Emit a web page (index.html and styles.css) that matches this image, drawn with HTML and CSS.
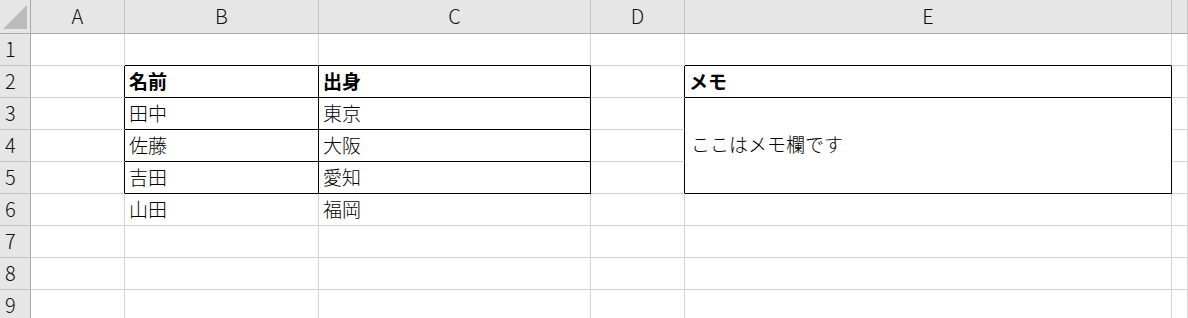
FILE: index.html
```html
<!DOCTYPE html>
<html lang="ja">
<head>
    <meta charset="UTF-8">
    <title>Sheet1</title>
    <link rel="stylesheet" href="styles.css">
</head>
<body>

<div class="sheet">
    <!-- column headers -->
    <div class="corner">
        <svg width="24" height="24" viewBox="0 0 24 24"><polygon points="0,24 24,24 24,0" fill="#bcbcbc"/></svg>
    </div>
    <div class="col-head">A</div>
    <div class="col-head">B</div>
    <div class="col-head">C</div>
    <div class="col-head">D</div>
    <div class="col-head">E</div>
    <div class="col-head"></div>

    <!-- row 1 -->
    <div class="row-head">1</div>
    <div class="cell"></div>
    <div class="cell line-b"></div>
    <div class="cell line-b"></div>
    <div class="cell"></div>
    <div class="cell line-b"></div>
    <div class="cell"></div>

    <!-- row 2 -->
    <div class="row-head">2</div>
    <div class="cell line-r"></div>
    <div class="cell line-r line-b bold">名前</div>
    <div class="cell line-r line-b bold">出身</div>
    <div class="cell line-r"></div>
    <div class="cell line-r line-b bold">メモ</div>
    <div class="cell"></div>

    <!-- row 3 -->
    <div class="row-head">3</div>
    <div class="cell line-r"></div>
    <div class="cell line-r line-b">田中</div>
    <div class="cell line-r line-b">東京</div>
    <div class="cell line-r"></div>
    <div class="cell line-r line-b memo">ここはメモ欄です</div>
    <div class="cell"></div>

    <!-- row 4 -->
    <div class="row-head">4</div>
    <div class="cell line-r"></div>
    <div class="cell line-r line-b">佐藤</div>
    <div class="cell line-r line-b">大阪</div>
    <div class="cell line-r"></div>
    <div class="cell"></div>

    <!-- row 5 -->
    <div class="row-head">5</div>
    <div class="cell line-r"></div>
    <div class="cell line-r line-b">吉田</div>
    <div class="cell line-r line-b">愛知</div>
    <div class="cell line-r"></div>
    <div class="cell"></div>

    <!-- row 6 -->
    <div class="row-head">6</div>
    <div class="cell"></div>
    <div class="cell">山田</div>
    <div class="cell">福岡</div>
    <div class="cell"></div>
    <div class="cell"></div>
    <div class="cell"></div>

    <!-- rows 7-9 -->
    <div class="row-head">7</div>
    <div class="cell"></div><div class="cell"></div><div class="cell"></div>
    <div class="cell"></div><div class="cell"></div><div class="cell"></div>

    <div class="row-head">8</div>
    <div class="cell"></div><div class="cell"></div><div class="cell"></div>
    <div class="cell"></div><div class="cell"></div><div class="cell"></div>

    <div class="row-head">9</div>
    <div class="cell"></div><div class="cell"></div><div class="cell"></div>
    <div class="cell"></div><div class="cell"></div><div class="cell"></div>
</div>

</body>
</html>
```

FILE: styles.css
```css
body {
    margin: 0;
    background-color: #ffffff;
    font-family: "Noto Sans CJK JP", "Noto Sans", sans-serif;
    overflow: hidden;
}
.sheet {
    display: grid;
    grid-template-columns: 31px 94px 194px 272px 94px 487px 1fr;
    grid-template-rows: 34px repeat(9, 32px);
    width: 1188px;
    height: 318px;
    overflow: hidden;
}
.sheet > div {
    box-sizing: border-box;
    min-width: 0;
}
.corner {
    background-color: #e6e6e6;
    border-right: 1px solid #ababab;
    border-bottom: 1px solid #ababab;
    display: flex;
    justify-content: flex-end;
    align-items: flex-end;
    padding: 0 3px 4px 0;
}
.corner svg {
    display: block;
}
.col-head {
    background-color: #e6e6e6;
    border-right: 1px solid #c4c4c4;
    border-bottom: 1px solid #ababab;
    display: flex;
    justify-content: center;
    align-items: center;
    padding-bottom: 2px;
    font-size: 20px;
    font-weight: 300;
    color: #111;
}
.row-head {
    background-color: #e6e6e6;
    border-right: 1px solid #ababab;
    border-bottom: 1px solid #c4c4c4;
    display: flex;
    align-items: center;
    padding: 0 0 2px 5px;
    font-size: 20px;
    font-weight: 300;
    color: #111;
}
.cell {
    border-right: 1px solid #d4d4d4;
    border-bottom: 1px solid #d4d4d4;
    display: flex;
    align-items: center;
    padding: 0 0 3px 4px;
    font-size: 19px;
    font-weight: 300;
    color: #000;
    white-space: nowrap;
}
.cell.line-r {
    border-right-color: #000;
}
.cell.line-b {
    border-bottom-color: #000;
}
.cell.bold {
    font-weight: 700;
}
.cell.memo {
    grid-row: span 3;
    padding-left: 6px;
    padding-bottom: 4px;
}
```
